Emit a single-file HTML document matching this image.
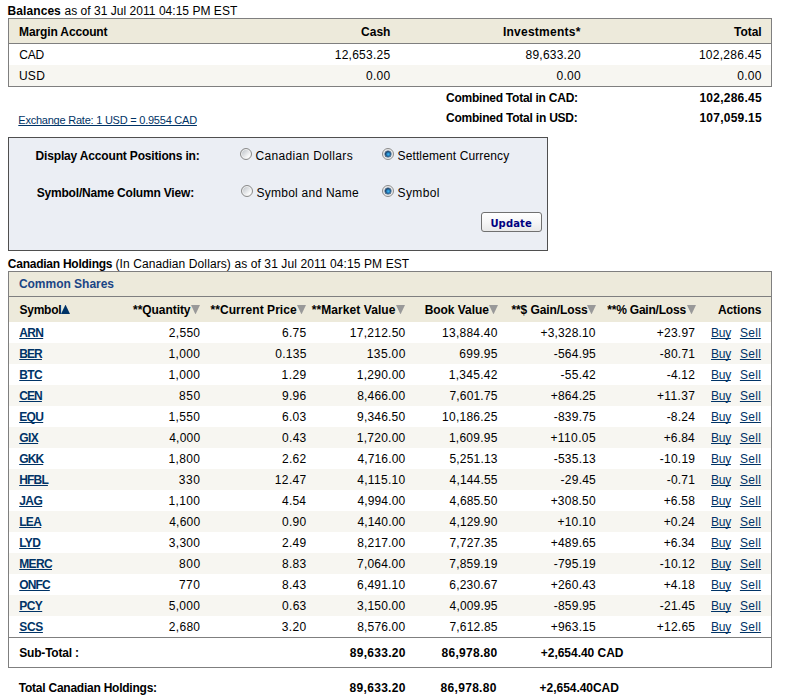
<!DOCTYPE html>
<html><head><meta charset="utf-8">
<title>Account Holdings</title>
<style>
html,body{margin:0;padding:0;background:#fff;}
body{width:785px;height:698px;position:relative;overflow:hidden;font-family:"Liberation Sans",sans-serif;font-size:12px;color:#000;}
.abs{position:absolute;white-space:nowrap;line-height:14px;}
.f{position:relative;}
b{font-weight:bold;}
table{border-collapse:separate;border-spacing:0;table-layout:fixed;}
td{padding:0;font-size:12px;white-space:nowrap;overflow:visible;line-height:14px;}
a{color:#003366;text-decoration:underline;text-decoration-skip-ink:none;}
#t1{position:absolute;left:8px;top:18px;width:764px;border:1px solid #7f7f7f;box-sizing:border-box;}
#t1 td{height:21px;text-align:right;}
#t1 tr.h td{height:23px;padding-top:1px;background:#edeadb;font-weight:bold;border-bottom:1px solid #7f7f7f;}
#t1 tr.alt td{background:#f7f6f1;}
#t1 td.l{text-align:left;padding-left:11px;}
#t1 td.last{padding-right:10px;}
#box{position:absolute;left:8px;top:137px;width:540px;height:114px;box-sizing:border-box;border:1px solid #4f4f4f;background:#ebeef4;}
.radio{position:absolute;width:12px;height:12px;border-radius:50%;border:1px solid #8a8a8a;box-sizing:border-box;background:linear-gradient(135deg,#bfc4c9 10%,#ffffff 80%);box-shadow:inset 0 0 0 1px #f2f2f2;}
.radio.on{background:#fff;box-shadow:inset 0 0 0 1px #e4e4e4;}
.radio.on::after{content:"";position:absolute;left:2px;top:2px;width:6px;height:6px;border-radius:50%;background:radial-gradient(circle at 55% 55%,#45bdf0 0%,#2a8fd0 25%,#173f68 62%,#12304f 100%);box-shadow:0 0 0 0.5px #1a3f66;}
#btn{position:absolute;left:481px;top:212px;width:61px;height:20px;box-sizing:border-box;border:1px solid #707070;border-radius:3px;background:linear-gradient(#ffffff 0%,#f6f6f6 50%,#e9e9e9 100%);font-family:"DejaVu Sans","Liberation Sans",sans-serif;font-weight:bold;font-size:10px;color:#000080;text-align:center;line-height:21px;}
#t2{position:absolute;left:8px;top:271px;width:764px;border:1px solid #7f7f7f;box-sizing:border-box;}
#t2 td{height:21px;text-align:right;}
#t2 tr.cs td{height:24px;background:#edeadb;text-align:left;padding-left:11px;font-weight:bold;color:#1a4585;border-bottom:1px solid #7f7f7f;}
#t2 tr.h td{height:25px;background:#edeadb;font-weight:bold;}
#t2 tr.alt td{background:#f7f6f1;}
#t2 td.l{text-align:left;padding-left:11px;}
#t2 td.l a{font-weight:bold;}
#t2 td.act{padding-right:10px;}
#t2 tr.sub td{height:29px;font-weight:bold;border-top:1px solid #7f7f7f;}
#t2 td.gl{text-align:left;padding-left:34px;}
.tri,.triup{position:absolute;top:33px;width:9px;height:9px;display:block;}
</style></head><body>
<div class="abs" style="left:8px;top:4px;"><b><span class="f" id="t1b" style="letter-spacing:0.07px;left:-0.4px;">Balances</span></b> <span class="f" id="t1n" style="letter-spacing:0.03px;left:-0.1px;">as of 31 Jul 2011 04:15 PM EST</span></div>
<table id="t1"><colgroup><col style="width:200px"><col style="width:181px"><col style="width:191px"><col style="width:190px"></colgroup>
<tr class="h"><td class="l"><span class="f" id="h1a" style="letter-spacing:-0.14px;left:-0.9px;">Margin Account</span></td><td><span class="f" id="h1b" style="letter-spacing:-0.00px;left:0.4px;">Cash</span></td><td><span class="f" id="h1c" style="letter-spacing:0.26px;left:-0.3px;">Investments*</span></td><td class="last"><span class="f" id="h1d" style="letter-spacing:-0.03px;left:0.6px;">Total</span></td></tr>
<tr><td class="l"><span class="f" id="r1a" style="letter-spacing:-0.17px;left:-0.8px;">CAD</span></td><td><span class="f" id="r1b" style="letter-spacing:0.25px;left:0.4px;">12,653.25</span></td><td><span class="f" id="r1c" style="letter-spacing:0.23px;">89,633.20</span></td><td class="last"><span class="f" id="r1d" style="letter-spacing:0.27px;left:0.7px;">102,286.45</span></td></tr>
<tr class="alt"><td class="l"><span class="f" id="r2a" style="letter-spacing:0.29px;left:-1.1px;">USD</span></td><td><span class="f" id="r2b" style="letter-spacing:0.29px;left:0.5px;">0.00</span></td><td><span class="f" id="r2c" style="letter-spacing:0.29px;left:-0.0px;">0.00</span></td><td class="last"><span class="f" id="r2d" style="letter-spacing:0.29px;left:0.7px;">0.00</span></td></tr>
</table>
<div class="abs" style="left:446px;top:91px;"><b><span class="f" id="c1" style="letter-spacing:-0.24px;left:0.0px;">Combined Total in CAD:</span></b></div>
<div class="abs" style="right:23px;top:91px;"><b><span class="f" id="c1n" style="letter-spacing:0.24px;left:-0.1px;">102,286.45</span></b></div>
<div class="abs" style="left:446px;top:111px;"><b><span class="f" id="c2" style="letter-spacing:-0.22px;left:0.0px;">Combined Total in USD:</span></b></div>
<div class="abs" style="right:23px;top:111px;"><b><span class="f" id="c2n" style="letter-spacing:0.24px;left:-0.1px;">107,059.15</span></b></div>
<div class="abs" style="left:18px;top:114px;line-height:13px;font-size:11px;"><a style="text-underline-offset:0.5px"><span class="f" id="ex" style="letter-spacing:-0.23px;left:0.3px;">Exchange Rate: 1 USD = 0.9554 CAD</span></a></div>
<div id="box"></div>
<div class="abs" style="left:36px;top:149px;"><b><span class="f" id="o1" style="letter-spacing:-0.17px;left:-0.4px;">Display Account Positions in:</span></b></div>
<div class="abs" style="left:36px;top:186px;"><b><span class="f" id="o2" style="letter-spacing:-0.19px;left:0.7px;">Symbol/Name Column View:</span></b></div>
<div class="radio" style="left:240px;top:148px;"></div>
<div class="abs" style="left:256px;top:149px;"><span class="f" id="o3" style="letter-spacing:0.34px;left:-0.5px;">Canadian Dollars</span></div>
<div class="radio on" style="left:382px;top:148px;"></div>
<div class="abs" style="left:398px;top:149px;"><span class="f" id="o4" style="letter-spacing:0.13px;left:-0.5px;">Settlement Currency</span></div>
<div class="radio" style="left:241px;top:185px;"></div>
<div class="abs" style="left:257px;top:186px;"><span class="f" id="o5" style="letter-spacing:0.25px;left:-0.5px;">Symbol and Name</span></div>
<div class="radio on" style="left:382px;top:185px;"></div>
<div class="abs" style="left:398px;top:186px;"><span class="f" id="o6" style="letter-spacing:0.38px;left:-0.5px;">Symbol</span></div>
<div id="btn"><span class="f" id="btnt" style="letter-spacing:0.12px;left:-0.4px;">Update</span></div>
<div class="abs" style="left:8px;top:257px;"><b><span class="f" id="t2b" style="letter-spacing:-0.25px;left:-0.2px;">Canadian Holdings</span></b> <span class="f" id="t2n" style="letter-spacing:0.10px;left:-0.3px;">(In Canadian Dollars) as of 31 Jul 2011 04:15 PM EST</span></div>
<table id="t2"><colgroup><col style="width:102px"><col style="width:90px"><col style="width:106px"><col style="width:99px"><col style="width:92px"><col style="width:99px"><col style="width:99px"><col style="width:75px"></colgroup>
<tr class="cs"><td colspan="8"><span class="f" id="cs" style="letter-spacing:-0.02px;left:-1.1px;">Common Shares</span></td></tr>
<tr class="h"><td class="l"><span class="f" id="hs" style="letter-spacing:-0.25px;left:-0.5px;">Symbol</span><svg class="triup" style="left:52px" viewBox="0 0 9 9"><polygon points="4.5,-0.4 9,9 0,9" fill="#003366"/></svg></td><td><span class="f" id="hq" style="letter-spacing:-0.06px;left:-10.5px;">**Quantity</span><svg class="tri" style="left:182px" viewBox="0 0 9 9"><polygon points="0,0 9,0 4.5,9.4" fill="#999"/></svg></td><td><span class="f" id="hc" style="letter-spacing:0.05px;left:-10.3px;">**Current Price</span><svg class="tri" style="left:288px" viewBox="0 0 9 9"><polygon points="0,0 9,0 4.5,9.4" fill="#999"/></svg></td><td><span class="f" id="hm" style="letter-spacing:0.08px;left:-10.5px;">**Market Value</span><svg class="tri" style="left:387px" viewBox="0 0 9 9"><polygon points="0,0 9,0 4.5,9.4" fill="#999"/></svg></td><td><span class="f" id="hb" style="letter-spacing:-0.06px;left:-9.2px;">Book Value</span><svg class="tri" style="left:479.7px" viewBox="0 0 9 9"><polygon points="0,0 9,0 4.5,9.4" fill="#999"/></svg></td><td><span class="f" id="hg" style="letter-spacing:-0.08px;left:-9.3px;">**$ Gain/Loss</span><svg class="tri" style="left:578.3px" viewBox="0 0 9 9"><polygon points="0,0 9,0 4.5,9.4" fill="#999"/></svg></td><td><span class="f" id="hp" style="letter-spacing:-0.21px;left:-10.1px;">**% Gain/Loss</span><svg class="tri" style="left:677.7px" viewBox="0 0 9 9"><polygon points="0,0 9,0 4.5,9.4" fill="#999"/></svg></td><td class="act"><span class="f" id="ha" style="letter-spacing:-0.11px;left:0.1px;">Actions</span></td></tr>
<tr><td class="l"><a><span class="f" id="sy0" style="letter-spacing:-0.67px;left:-0.8px;">ARN</span></a></td><td><span class="f" id="n0_0" style="letter-spacing:0.29px;left:-0.7px;">2,550</span></td><td><span class="f" id="n0_1" style="letter-spacing:0.33px;left:-0.4px;">6.75</span></td><td><span class="f" id="n0_2" style="letter-spacing:0.25px;left:-0.5px;">17,212.50</span></td><td><span class="f" id="n0_3" style="letter-spacing:0.25px;left:-0.3px;">13,884.40</span></td><td><span class="f" id="n0_4" style="letter-spacing:0.16px;left:-1.3px;">+3,328.10</span></td><td><span class="f" id="n0_5" style="letter-spacing:0.23px;left:-0.8px;">+23.97</span></td><td class="act"><a><span class="f" id="b0" style="letter-spacing:-0.30px;left:-5.7px;">Buy</span></a> <a><span class="f" id="se0" style="letter-spacing:0.30px;">Sell</span></a></td></tr>
<tr class="alt"><td class="l"><a><span class="f" id="sy1" style="letter-spacing:-0.88px;left:-0.8px;">BER</span></a></td><td><span class="f" id="n1_0" style="letter-spacing:0.34px;left:-0.7px;">1,000</span></td><td><span class="f" id="n1_1" style="letter-spacing:0.27px;left:-0.4px;">0.135</span></td><td><span class="f" id="n1_2" style="letter-spacing:0.36px;left:-0.3px;">135.00</span></td><td><span class="f" id="n1_3" style="letter-spacing:0.28px;left:-0.3px;">699.95</span></td><td><span class="f" id="n1_4" style="letter-spacing:0.22px;left:-1.0px;">-564.95</span></td><td><span class="f" id="n1_5" style="letter-spacing:0.23px;left:-0.8px;">-80.71</span></td><td class="act"><a><span class="f" id="b1" style="letter-spacing:-0.29px;left:-5.7px;">Buy</span></a> <a><span class="f" id="se1" style="letter-spacing:0.30px;">Sell</span></a></td></tr>
<tr><td class="l"><a><span class="f" id="sy2" style="letter-spacing:-0.66px;left:-0.8px;">BTC</span></a></td><td><span class="f" id="n2_0" style="letter-spacing:0.34px;left:-0.7px;">1,000</span></td><td><span class="f" id="n2_1" style="letter-spacing:0.41px;left:-0.4px;">1.29</span></td><td><span class="f" id="n2_2" style="letter-spacing:0.25px;left:-0.5px;">1,290.00</span></td><td><span class="f" id="n2_3" style="letter-spacing:0.26px;left:-0.4px;">1,345.42</span></td><td><span class="f" id="n2_4" style="letter-spacing:0.23px;left:-1.0px;">-55.42</span></td><td><span class="f" id="n2_5" style="letter-spacing:0.24px;left:-0.8px;">-4.12</span></td><td class="act"><a><span class="f" id="b2" style="letter-spacing:-0.30px;left:-5.7px;">Buy</span></a> <a><span class="f" id="se2" style="letter-spacing:0.30px;">Sell</span></a></td></tr>
<tr class="alt"><td class="l"><a><span class="f" id="sy3" style="letter-spacing:-0.88px;left:-0.8px;">CEN</span></a></td><td><span class="f" id="n3_0" style="letter-spacing:0.55px;left:-0.4px;">850</span></td><td><span class="f" id="n3_1" style="letter-spacing:0.34px;left:-0.4px;">9.96</span></td><td><span class="f" id="n3_2" style="letter-spacing:0.18px;left:-0.7px;">8,466.00</span></td><td><span class="f" id="n3_3" style="letter-spacing:0.19px;left:-0.4px;">7,601.75</span></td><td><span class="f" id="n3_4" style="letter-spacing:0.22px;left:-1.0px;">+864.25</span></td><td><span class="f" id="n3_5" style="letter-spacing:0.39px;left:-0.6px;">+11.37</span></td><td class="act"><a><span class="f" id="b3" style="letter-spacing:-0.29px;left:-5.7px;">Buy</span></a> <a><span class="f" id="se3" style="letter-spacing:0.30px;">Sell</span></a></td></tr>
<tr><td class="l"><a><span class="f" id="sy4" style="letter-spacing:-0.67px;left:-0.8px;">EQU</span></a></td><td><span class="f" id="n4_0" style="letter-spacing:0.34px;left:-0.7px;">1,550</span></td><td><span class="f" id="n4_1" style="letter-spacing:0.33px;left:-0.4px;">6.03</span></td><td><span class="f" id="n4_2" style="letter-spacing:0.19px;left:-0.7px;">9,346.50</span></td><td><span class="f" id="n4_3" style="letter-spacing:0.25px;left:-0.3px;">10,186.25</span></td><td><span class="f" id="n4_4" style="letter-spacing:0.22px;left:-1.0px;">-839.75</span></td><td><span class="f" id="n4_5" style="letter-spacing:0.19px;left:-1.0px;">-8.24</span></td><td class="act"><a><span class="f" id="b4" style="letter-spacing:-0.30px;left:-5.7px;">Buy</span></a> <a><span class="f" id="se4" style="letter-spacing:0.30px;">Sell</span></a></td></tr>
<tr class="alt"><td class="l"><a><span class="f" id="sy5" style="letter-spacing:-0.59px;left:-0.8px;">GIX</span></a></td><td><span class="f" id="n5_0" style="letter-spacing:0.21px;left:-0.7px;">4,000</span></td><td><span class="f" id="n5_1" style="letter-spacing:0.31px;left:-0.4px;">0.43</span></td><td><span class="f" id="n5_2" style="letter-spacing:0.25px;left:-0.5px;">1,720.00</span></td><td><span class="f" id="n5_3" style="letter-spacing:0.26px;left:-0.3px;">1,609.95</span></td><td><span class="f" id="n5_4" style="letter-spacing:0.39px;left:-1.0px;">+110.05</span></td><td><span class="f" id="n5_5" style="letter-spacing:0.19px;left:-1.0px;">+6.84</span></td><td class="act"><a><span class="f" id="b5" style="letter-spacing:-0.29px;left:-5.7px;">Buy</span></a> <a><span class="f" id="se5" style="letter-spacing:0.30px;">Sell</span></a></td></tr>
<tr><td class="l"><a><span class="f" id="sy6" style="letter-spacing:-0.89px;left:-0.8px;">GKK</span></a></td><td><span class="f" id="n6_0" style="letter-spacing:0.34px;left:-0.7px;">1,800</span></td><td><span class="f" id="n6_1" style="letter-spacing:0.33px;left:-0.4px;">2.62</span></td><td><span class="f" id="n6_2" style="letter-spacing:0.15px;left:-0.7px;">4,716.00</span></td><td><span class="f" id="n6_3" style="letter-spacing:0.20px;left:-0.3px;">5,251.13</span></td><td><span class="f" id="n6_4" style="letter-spacing:0.22px;left:-1.0px;">-535.13</span></td><td><span class="f" id="n6_5" style="letter-spacing:0.23px;left:-0.8px;">-10.19</span></td><td class="act"><a><span class="f" id="b6" style="letter-spacing:-0.30px;left:-5.7px;">Buy</span></a> <a><span class="f" id="se6" style="letter-spacing:0.30px;">Sell</span></a></td></tr>
<tr class="alt"><td class="l"><a><span class="f" id="sy7" style="letter-spacing:-0.82px;left:-0.8px;">HFBL</span></a></td><td><span class="f" id="n7_0" style="letter-spacing:0.59px;left:-0.4px;">330</span></td><td><span class="f" id="n7_1" style="letter-spacing:0.35px;left:-0.4px;">12.47</span></td><td><span class="f" id="n7_2" style="letter-spacing:0.30px;left:-0.5px;">4,115.10</span></td><td><span class="f" id="n7_3" style="letter-spacing:0.16px;left:-0.4px;">4,144.55</span></td><td><span class="f" id="n7_4" style="letter-spacing:0.23px;left:-1.0px;">-29.45</span></td><td><span class="f" id="n7_5" style="letter-spacing:0.24px;left:-0.8px;">-0.71</span></td><td class="act"><a><span class="f" id="b7" style="letter-spacing:-0.29px;left:-5.7px;">Buy</span></a> <a><span class="f" id="se7" style="letter-spacing:0.30px;">Sell</span></a></td></tr>
<tr><td class="l"><a><span class="f" id="sy8" style="letter-spacing:-0.56px;left:-0.8px;">JAG</span></a></td><td><span class="f" id="n8_0" style="letter-spacing:0.34px;left:-0.7px;">1,100</span></td><td><span class="f" id="n8_1" style="letter-spacing:0.19px;left:-0.8px;">4.54</span></td><td><span class="f" id="n8_2" style="letter-spacing:0.15px;left:-0.7px;">4,994.00</span></td><td><span class="f" id="n8_3" style="letter-spacing:0.15px;left:-0.5px;">4,685.50</span></td><td><span class="f" id="n8_4" style="letter-spacing:0.22px;left:-1.1px;">+308.50</span></td><td><span class="f" id="n8_5" style="letter-spacing:0.24px;left:-0.8px;">+6.58</span></td><td class="act"><a><span class="f" id="b8" style="letter-spacing:-0.30px;left:-5.7px;">Buy</span></a> <a><span class="f" id="se8" style="letter-spacing:0.30px;">Sell</span></a></td></tr>
<tr class="alt"><td class="l"><a><span class="f" id="sy9" style="letter-spacing:-0.67px;left:-0.8px;">LEA</span></a></td><td><span class="f" id="n9_0" style="letter-spacing:0.21px;left:-0.7px;">4,600</span></td><td><span class="f" id="n9_1" style="letter-spacing:0.29px;left:-0.5px;">0.90</span></td><td><span class="f" id="n9_2" style="letter-spacing:0.15px;left:-0.7px;">4,140.00</span></td><td><span class="f" id="n9_3" style="letter-spacing:0.15px;left:-0.5px;">4,129.90</span></td><td><span class="f" id="n9_4" style="letter-spacing:0.23px;left:-1.2px;">+10.10</span></td><td><span class="f" id="n9_5" style="letter-spacing:0.19px;left:-1.0px;">+0.24</span></td><td class="act"><a><span class="f" id="b9" style="letter-spacing:-0.29px;left:-5.7px;">Buy</span></a> <a><span class="f" id="se9" style="letter-spacing:0.30px;">Sell</span></a></td></tr>
<tr><td class="l"><a><span class="f" id="sy10" style="letter-spacing:-0.57px;left:-0.8px;">LYD</span></a></td><td><span class="f" id="n10_0" style="letter-spacing:0.30px;left:-0.7px;">3,300</span></td><td><span class="f" id="n10_1" style="letter-spacing:0.33px;left:-0.4px;">2.49</span></td><td><span class="f" id="n10_2" style="letter-spacing:0.18px;left:-0.7px;">8,217.00</span></td><td><span class="f" id="n10_3" style="letter-spacing:0.20px;left:-0.3px;">7,727.35</span></td><td><span class="f" id="n10_4" style="letter-spacing:0.22px;left:-1.0px;">+489.65</span></td><td><span class="f" id="n10_5" style="letter-spacing:0.19px;left:-1.0px;">+6.34</span></td><td class="act"><a><span class="f" id="b10" style="letter-spacing:-0.30px;left:-5.7px;">Buy</span></a> <a><span class="f" id="se10" style="letter-spacing:0.30px;">Sell</span></a></td></tr>
<tr class="alt"><td class="l"><a><span class="f" id="sy11" style="letter-spacing:-0.64px;left:-0.8px;">MERC</span></a></td><td><span class="f" id="n11_0" style="letter-spacing:0.55px;left:-0.4px;">800</span></td><td><span class="f" id="n11_1" style="letter-spacing:0.33px;left:-0.4px;">8.83</span></td><td><span class="f" id="n11_2" style="letter-spacing:0.19px;left:-0.7px;">7,064.00</span></td><td><span class="f" id="n11_3" style="letter-spacing:0.20px;left:-0.4px;">7,859.19</span></td><td><span class="f" id="n11_4" style="letter-spacing:0.22px;left:-1.0px;">-795.19</span></td><td><span class="f" id="n11_5" style="letter-spacing:0.23px;left:-0.8px;">-10.12</span></td><td class="act"><a><span class="f" id="b11" style="letter-spacing:-0.29px;left:-5.7px;">Buy</span></a> <a><span class="f" id="se11" style="letter-spacing:0.30px;">Sell</span></a></td></tr>
<tr><td class="l"><a><span class="f" id="sy12" style="letter-spacing:-0.85px;left:-0.8px;">ONFC</span></a></td><td><span class="f" id="n12_0" style="letter-spacing:0.57px;left:-0.4px;">770</span></td><td><span class="f" id="n12_1" style="letter-spacing:0.33px;left:-0.4px;">8.43</span></td><td><span class="f" id="n12_2" style="letter-spacing:0.19px;left:-0.7px;">6,491.10</span></td><td><span class="f" id="n12_3" style="letter-spacing:0.20px;left:-0.4px;">6,230.67</span></td><td><span class="f" id="n12_4" style="letter-spacing:0.22px;left:-1.0px;">+260.43</span></td><td><span class="f" id="n12_5" style="letter-spacing:0.24px;left:-0.8px;">+4.18</span></td><td class="act"><a><span class="f" id="b12" style="letter-spacing:-0.30px;left:-5.7px;">Buy</span></a> <a><span class="f" id="se12" style="letter-spacing:0.30px;">Sell</span></a></td></tr>
<tr class="alt"><td class="l"><a><span class="f" id="sy13" style="letter-spacing:-0.56px;left:-0.8px;">PCY</span></a></td><td><span class="f" id="n13_0" style="letter-spacing:0.31px;left:-0.7px;">5,000</span></td><td><span class="f" id="n13_1" style="letter-spacing:0.31px;left:-0.4px;">0.63</span></td><td><span class="f" id="n13_2" style="letter-spacing:0.19px;left:-0.7px;">3,150.00</span></td><td><span class="f" id="n13_3" style="letter-spacing:0.16px;left:-0.4px;">4,009.95</span></td><td><span class="f" id="n13_4" style="letter-spacing:0.22px;left:-1.0px;">-859.95</span></td><td><span class="f" id="n13_5" style="letter-spacing:0.23px;left:-0.8px;">-21.45</span></td><td class="act"><a><span class="f" id="b13" style="letter-spacing:-0.29px;left:-5.7px;">Buy</span></a> <a><span class="f" id="se13" style="letter-spacing:0.30px;">Sell</span></a></td></tr>
<tr><td class="l"><a><span class="f" id="sy14" style="letter-spacing:-0.33px;left:-0.8px;">SCS</span></a></td><td><span class="f" id="n14_0" style="letter-spacing:0.29px;left:-0.7px;">2,680</span></td><td><span class="f" id="n14_1" style="letter-spacing:0.33px;left:-0.5px;">3.20</span></td><td><span class="f" id="n14_2" style="letter-spacing:0.18px;left:-0.7px;">8,576.00</span></td><td><span class="f" id="n14_3" style="letter-spacing:0.20px;left:-0.3px;">7,612.85</span></td><td><span class="f" id="n14_4" style="letter-spacing:0.22px;left:-1.0px;">+963.15</span></td><td><span class="f" id="n14_5" style="letter-spacing:0.23px;left:-0.8px;">+12.65</span></td><td class="act"><a><span class="f" id="b14" style="letter-spacing:-0.30px;left:-5.7px;">Buy</span></a> <a><span class="f" id="se14" style="letter-spacing:0.30px;">Sell</span></a></td></tr>
<tr class="sub"><td class="l"><span class="f" id="st" style="letter-spacing:-0.21px;left:-0.7px;">Sub-Total :</span></td><td></td><td></td><td><span class="f" id="st1" style="letter-spacing:0.29px;left:-0.3px;">89,633.20</span></td><td><span class="f" id="st2" style="letter-spacing:0.29px;left:-0.5px;">86,978.80</span></td><td colspan="2" class="gl"><span class="f" id="st3" style="letter-spacing:-0.03px;left:8.8px;">+2,654.40 CAD</span></td><td></td></tr>
</table>
<div class="abs" style="left:19px;top:681px;"><b><span class="f" id="tt" style="letter-spacing:-0.24px;left:-0.2px;">Total Canadian Holdings:</span></b></div>
<div class="abs" style="left:351px;top:681px;"><b><span class="f" id="tt1" style="letter-spacing:0.32px;left:-1.5px;">89,633.20</span></b></div>
<div class="abs" style="left:441px;top:681px;"><b><span class="f" id="tt2" style="letter-spacing:0.32px;left:-0.5px;">86,978.80</span></b></div>
<div class="abs" style="left:540px;top:681px;"><b><span class="f" id="tt3" style="letter-spacing:-0.04px;left:-0.4px;">+2,654.40CAD</span></b></div>
</body></html>
